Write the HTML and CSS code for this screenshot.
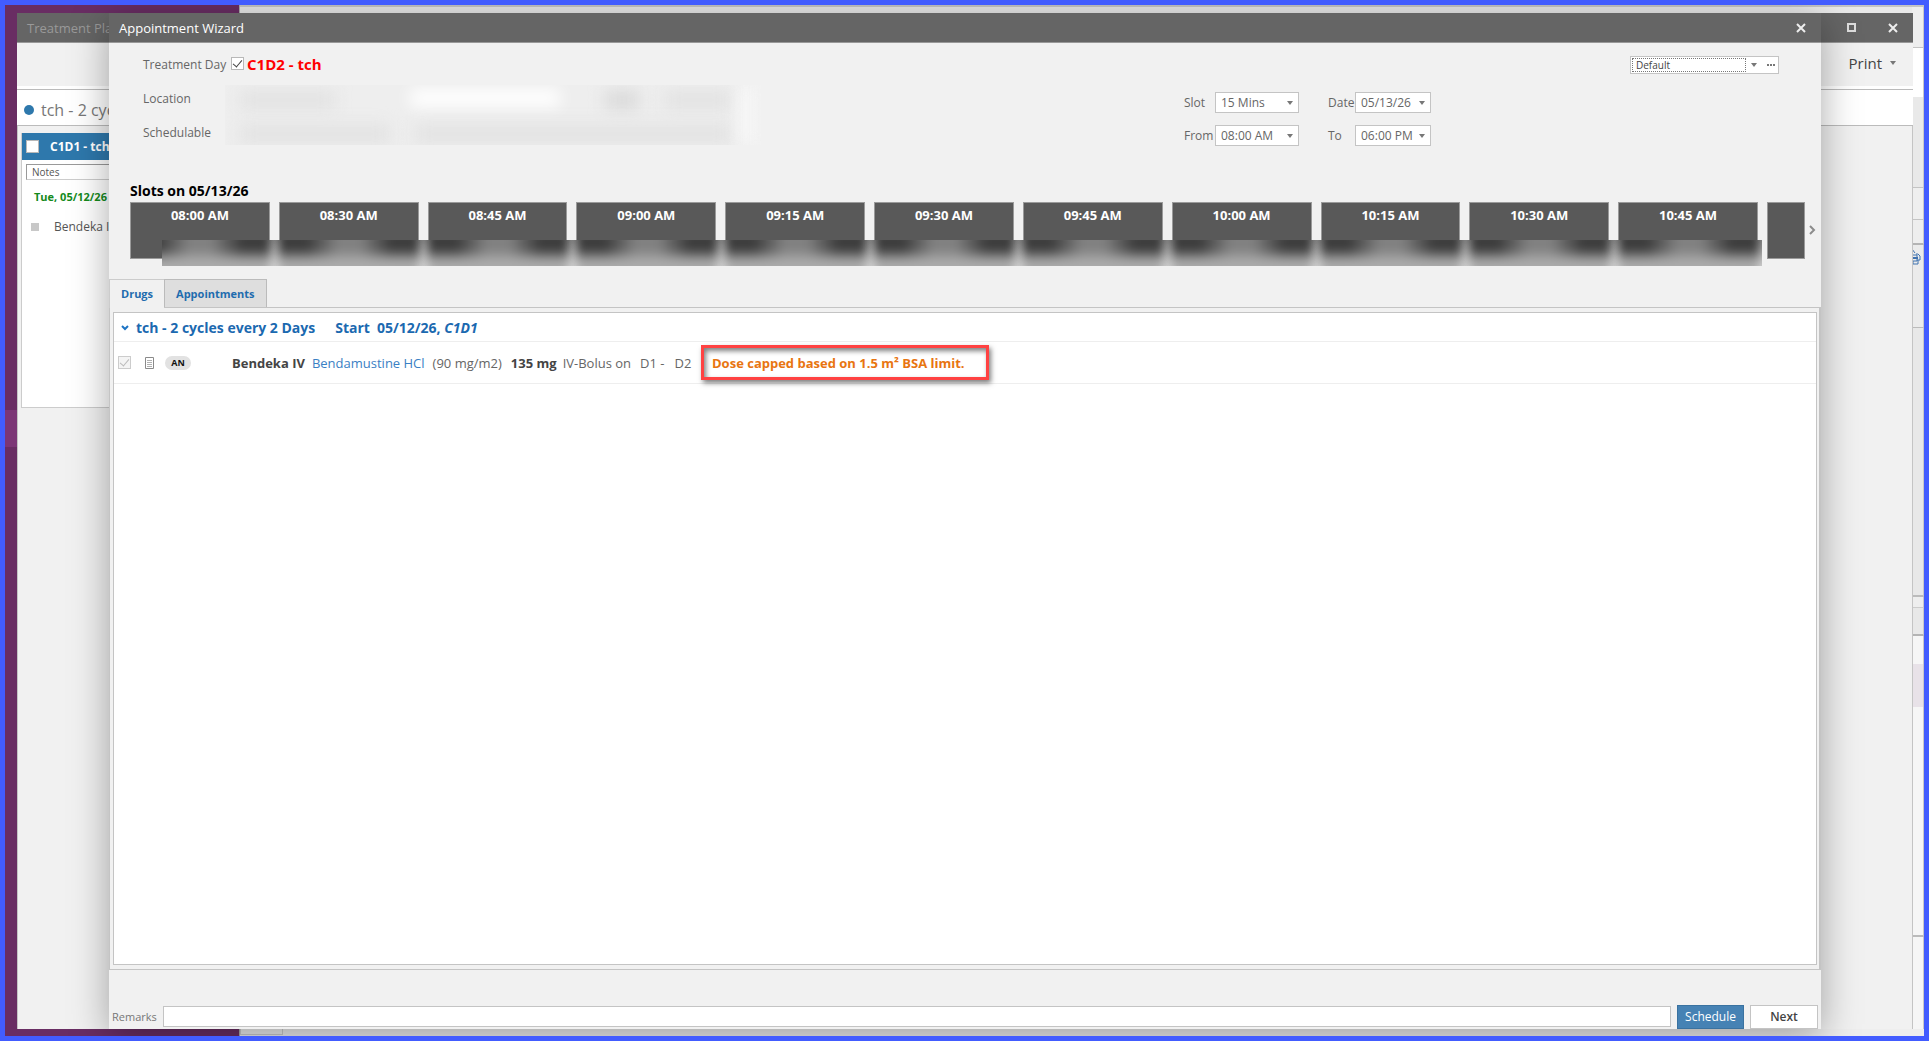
FILE: index.html
```html
<!DOCTYPE html>
<html lang="en">
<head>
<meta charset="utf-8">
<title>Appointment Wizard</title>
<link rel="stylesheet" href="styles.css">
</head>
<body>
<div class="app">
  <div class="app-rail"><div class="app-rail-mark"></div></div>
  <div class="app-body">
    <div class="app-top"></div>
    <div class="app-side">
      <div class="side-a"></div>
      <div class="side-b"></div>
      <div class="side-c"></div>
      <div class="side-d"></div>
      <div class="side-e"></div>
      <div class="side-f">
        <svg class="side-print" width="12" height="18" viewBox="0 0 12 18" fill="none" stroke="#3f72b0"><path d="M1 7V2l3 4M0 8h6v6H0M2 14v3h5v-4M5 7h2l2 2v4H6" /><path d="M2 11h5" stroke-width="2"/></svg>
      </div>
      <div class="side-g"></div>
      <div class="side-h"></div>
      <div class="side-i"></div>
      <div class="side-j"><div class="side-mark"></div></div>
      <div class="side-k"></div>
    </div>
    <div class="app-bottom"><div class="app-bottom-tab"></div></div>
  </div>
</div>

<section class="window plan">
  <header class="titlebar">
    <h2 class="plan-title">Treatment Plan</h2>
    <button class="win-btn" aria-label="Maximize"><svg width="10" height="10" viewBox="0 0 10 10" fill="none" stroke="#ddd" stroke-width="2"><rect x="1" y="1" width="7" height="7"/></svg></button>
    <button class="win-btn" aria-label="Close"><svg width="10" height="10" viewBox="0 0 10 10" stroke="#eee" stroke-width="2"><path d="M1 1l8 8M9 1l-8 8"/></svg></button>
  </header>
  <div class="plan-tools"><button class="print">Print <span class="caret"></span></button></div>
  <div class="plan-name"><span class="dot"></span>tch - 2 cycles</div>
  <div class="plan-area">
    <article class="day-card">
      <label class="day-head"><input type="checkbox" class="check">C1D1 - tch</label>
      <div class="day-notes">Notes</div>
      <div class="day-date">Tue, 05/12/26</div>
      <div class="day-drug"><span class="square"></span>Bendeka IV</div>
    </article>
  </div>
</section>

<section class="window wizard" role="dialog" aria-label="Appointment Wizard">
  <header class="titlebar">
    <h1 class="wizard-title">Appointment Wizard</h1>
    <button class="win-btn" aria-label="Close wizard"><svg width="10" height="10" viewBox="0 0 10 10" stroke="#eee" stroke-width="2"><path d="M1 1l8 8M9 1l-8 8"/></svg></button>
  </header>

  <div class="setup">
    <div class="facts">
      <label class="fact" for="day">Treatment Day</label>
      <div class="day"><input type="checkbox" class="check" id="day" checked><strong>C1D2 - tch</strong></div>
      <div class="fact">Location</div>
      <div class="masked"><i class="m1"></i><i class="m2"></i><i class="m3"></i><i class="m4"></i><i class="m5"></i><i class="m6"></i><i class="m7"></i></div>
      <div class="fact">Schedulable</div>
    </div>
    <div class="times">
      <label for="slot">Slot</label>
      <div class="combo combo-wide"><select id="slot"><option>15 Mins</option></select><span class="caret"></span></div>
      <label for="date">Date</label>
      <div class="combo"><select id="date"><option>05/13/26</option></select><span class="caret"></span></div>
      <label for="from">From</label>
      <div class="combo combo-wide"><select id="from"><option>08:00 AM</option></select><span class="caret"></span></div>
      <label for="to">To</label>
      <div class="combo"><select id="to"><option>06:00 PM</option></select><span class="caret"></span></div>
    </div>
    <div class="preset">
      <select class="preset-select" aria-label="Preset"><option>Default</option></select>
      <span class="caret"></span>
      <button class="more" aria-label="More"><i></i><i></i><i></i></button>
    </div>
  </div>

  <h3 class="slots-title">Slots on 05/13/26</h3>
  <div class="slots">
    <button class="slot">08:00 AM</button>
    <button class="slot">08:30 AM</button>
    <button class="slot">08:45 AM</button>
    <button class="slot">09:00 AM</button>
    <button class="slot">09:15 AM</button>
    <button class="slot">09:30 AM</button>
    <button class="slot">09:45 AM</button>
    <button class="slot">10:00 AM</button>
    <button class="slot">10:15 AM</button>
    <button class="slot">10:30 AM</button>
    <button class="slot">10:45 AM</button>
    <button class="slot slot-cut" aria-label="Next slot"></button>
    <div class="slots-mask"><i></i><i></i><i></i><i></i><i></i><i></i><i></i><i></i><i></i><i></i><i></i></div>
    <button class="slots-next" aria-label="Later slots"><svg width="8" height="10" viewBox="0 0 8 10" fill="none" stroke="#8c8c8c" stroke-width="2"><path d="M1 1l4 4-4 4"/></svg></button>
  </div>

  <nav class="tabs">
    <button class="tab tab-on">Drugs</button>
    <button class="tab">Appointments</button>
  </nav>
  <div class="tab-page">
    <div class="drugs">
      <div class="group">
        <svg class="group-arrow" width="8" height="6" viewBox="0 0 8 6" fill="none" stroke="#1d74c4" stroke-width="2"><path d="M1 1l3 3 3-3"/></svg>
        <span class="group-name">tch - 2 cycles every 2 Days</span>
        <span class="group-start">Start</span>
        <span class="group-date">05/12/26, <em>C1D1</em></span>
      </div>
      <div class="drug">
        <input type="checkbox" class="check" checked disabled aria-label="Bendeka IV">
        <svg class="doc" width="10" height="12" viewBox="0 0 10 12" fill="#fff" stroke="#8a8a8a"><path d="M.5.5h8v11h-8z"/><path d="M2 3.500h5M2 5.500h5M2 7.500h5M2 9.500h5" stroke="#b0b0b0"/></svg>
        <span class="pill">AN</span>
        <div class="drug-text">
          <b>Bendeka IV</b>
          <a class="generic" href="#">Bendamustine HCl</a>
          <span class="per">(90 mg/m2)</span>
          <b class="dose">135 mg</b>
          <span class="route">IV-Bolus on</span>
          <span class="d1">D1 -</span>
          <span>D2</span>
        </div>
        <div class="cap">Dose capped based on 1.5 m² BSA limit.</div>
      </div>
    </div>
  </div>

  <footer class="foot">
    <label for="remarks">Remarks</label>
    <input type="text" id="remarks" class="remarks">
    <button class="btn btn-main">Schedule</button>
    <button class="btn">Next</button>
  </footer>
</section>
<div class="frame"></div>
</body>
</html>
```
FILE: styles.css
```css
* { box-sizing: border-box; }
body {
  margin: 0;
  height: 100vh;
  position: relative;
  overflow: hidden;
  font: 12px/16px "Open Sans", "Noto Sans", sans-serif;
  color: #555;
  background: #e9e9e9;
}
h1, h2, h3 { margin: 0; }
button, select, input { font: inherit; color: inherit; margin: 0; padding: 0; border: 0; background: none; border-radius: 0; }
i { display: block; }

.frame { position: absolute; inset: 0; border: 5px solid #425cff; pointer-events: none; }

/* main application behind the windows */
.app { height: 100%; display: flex; padding: 5px; }
.app-rail { width: 234px; background: #692d63; padding-top: 405px; }
.app-rail-mark { width: 12px; height: 37px; background: #7c3676; }
.app-body { flex: 1; display: flex; flex-direction: column; align-items: flex-end; border-left: 1px solid #aaa; }
.app-top { width: 100%; height: 2px; background: #c4c4c4; }
.app-side { flex: 1; width: 12px; display: flex; flex-direction: column; }
.app-side > div { border-right: 1px solid #c8c8c8; }
.side-a { height: 41px; background: #eee; border-bottom: 1px solid #c4c4c4; }
.side-b { height: 49px; background: #fff; }
.side-c { height: 91px; background: #e9e9e9; border-bottom: 1px solid #c4c4c4; }
.side-d { height: 31px; background: #efefef; }
.side-e { height: 26px; background: #eee; border-top: 1px solid #c4c4c4; border-bottom: 2px solid #b4b4b4; }
.side-f { height: 82px; background: #ebebeb; }
.side-print { display: block; margin-top: 2px; margin-left: -1px; }
.side-g { height: 270px; background: #e8e8e8; border-top: 1px solid #bbb; border-bottom: 2px solid #bbb; }
.side-h { height: 10px; background: #eee; }
.side-i { height: 29px; background: #e8e8e8; border-top: 1px solid #ccc; border-bottom: 2px solid #b4b4b4; }
.side-j { height: 301px; background: #f6f6f6; border-bottom: 2px solid #bbb; padding-top: 28px; }
.side-mark { height: 43px; background: #e8e2e8; }
.side-k { flex: 1; background: #f6f6f6; }
.app-bottom { width: 100%; height: 7px; background: #eee; }
.app-bottom-tab { width: 43px; height: 6px; border: 1px solid #ccc; border-top: 0; }

/* windows */
.window { position: absolute; top: 13px; bottom: 12px; display: flex; flex-direction: column; background: #f1f1f1; overflow: hidden; }
.plan { left: 17px; right: 16px; }
.wizard { left: 109px; right: 108px; box-shadow: 0 8px 36px rgba(0, 0, 0, .34); }
.titlebar { flex: none; height: 30px; display: flex; align-items: center; background: #656565; border-bottom: 1px solid #999; padding-right: 10px; }
.titlebar h1, .titlebar h2 { flex: 1; font-size: 13px; font-weight: 400; line-height: 20px; }
.plan-title { padding-left: 10px; color: #999; }
.wizard-title { padding-left: 10px; color: #fff; }
.win-btn { width: 20px; height: 20px; display: grid; place-items: center; }
.plan .titlebar { gap: 21px; }

.plan-tools { height: 46px; border-bottom: 3px solid #fff; display: flex; justify-content: flex-end; align-items: flex-start; padding: 9px 17px 0 0; }
.print { font-size: 15px; line-height: 22px; color: #444; display: flex; align-items: center; gap: 8px; }
.caret { width: 0; height: 0; border: 3px solid transparent; border-top: 4px solid #777; border-bottom: 0; flex: none; }
.plan-name { height: 37px; border-top: 1px solid #bbb; border-bottom: 1px solid #bbb; background: #fff; display: flex; align-items: center; gap: 7px; padding: 4px 0 0 7px; font-size: 16px; color: #777; }
.dot { width: 10px; height: 10px; border-radius: 50%; background: #2e78ac; }
.plan-area { flex: 1; border: solid #c4c4c4; border-width: 0 1px; padding: 7px 3px; }
.day-card { width: 240px; height: 275px; background: #fff; border: 1px solid #ccc; border-top: 0; }
.day-head { height: 27px; background: #2e78ac; color: #fff; font-weight: 700; display: flex; align-items: center; gap: 11px; padding-left: 4px; }
.day-notes { height: 16px; margin: 4px 0 0 4px; border: 1px solid #ccc; border-top-color: #999; border-left-color: #999; padding-left: 5px; font-size: 10px; line-height: 15px; }
.day-date { margin: 9px 0 0 12px; font-size: 11px; font-weight: 700; color: #148a1c; }
.day-drug { margin: 14px 0 0 9px; display: flex; align-items: center; gap: 15px; }
.square { width: 8px; height: 8px; background: #c8c8c8; }

/* tick boxes */
.check { appearance: none; flex: none; width: 13px; height: 13px; background: #fff; border: 1px solid #b8b8b8; display: grid; place-items: center; }
.check:checked::after { content: ""; width: 4px; height: 8px; margin-top: -2px; border: solid #444; border-width: 0 1px 1px 0; transform: rotate(40deg); }
.check:disabled { background: #f4f4f4; border-color: #ccc; }
.check:disabled::after { border-color: #bbb; }

/* wizard header fields */
.setup { height: 139px; display: flex; align-items: flex-start; padding: 10px 42px 0 34px; color: #666; }
.facts { flex: 1; display: grid; grid-template-columns: 82px 1fr; grid-template-rows: 21px 34px 34px; }
.fact { align-self: end; line-height: 18px; white-space: nowrap; }
.day { display: flex; align-items: center; gap: 3px; padding-left: 6px; }
.day strong { font-size: 15px; color: #f00; }
.masked { position: relative; grid-row: 2 / 4; grid-column: 2; height: 60px; width: 536px; margin-top: 11px; overflow: hidden; background: linear-gradient(90deg, #eee, #eee 93%, #f1f1f1); }
.masked i { position: absolute; filter: blur(8px); height: 18px; background: #e2e2e2; }
.masked .m1 { left: 15px; top: 6px; width: 95px; }
.masked .m2 { left: 185px; top: 4px; width: 150px; background: #fff; }
.masked .m3 { left: 380px; top: 6px; width: 34px; background: #d9d9d9; }
.masked .m4 { left: 440px; top: 6px; width: 66px; }
.masked .m5 { left: 15px; top: 40px; width: 150px; }
.masked .m6 { left: 190px; top: 40px; width: 316px; }
.masked .m7 { left: 514px; top: 0; width: 14px; height: 60px; background: #f8f8f8; }
.times { display: grid; grid-template-columns: 31px 113px 27px 76px; grid-auto-rows: 21px; row-gap: 12px; padding-top: 39px; margin-right: 199px; align-items: center; }
.combo { height: 21px; background: #fff; border: 1px solid #c4c4c4; display: flex; align-items: center; padding-right: 5px; }
.combo-wide { width: 84px; }
.combo select { flex: 1; min-width: 0; appearance: none; padding-left: 5px; }
.preset { width: 149px; height: 18px; margin-top: 3px; background: #fff; border: 1px solid #c4c4c4; display: flex; align-items: center; padding-left: 1px; }
.preset-select { appearance: none; width: 114px; height: 14px; border: 1px dotted #777; font-size: 10px; line-height: 12px; padding-left: 3px; margin-right: 5px; color: #444; }
.more { display: flex; gap: 1px; margin-left: 10px; }
.more i { width: 2px; height: 2px; background: #777; }

/* slot strip */
.slots-title { padding-left: 21px; font-size: 14px; line-height: 18px; color: #000; }
.slots { position: relative; margin: 2px 16px 0 21px; height: 57px; display: flex; gap: 9px; }
.slot { flex: 1; background: #595959; border: 1px solid #9a9a9a; color: #fff; font-size: 13px; font-weight: 700; line-height: 16px; padding-top: 4px; display: flex; justify-content: center; }
.slot-cut { flex: none; width: 38px; }
.slots-mask { position: absolute; left: 32px; right: 43px; top: 38px; height: 26px; padding-right: 3px; overflow: hidden; display: flex; gap: 9px; background: linear-gradient(#989898, #d4d4d4); }
.slots-mask i { flex: 1; height: 44px; margin-top: -8px; filter: blur(5px); background: linear-gradient(transparent 38%, #acacac 68%), linear-gradient(90deg, #3c3c3c 20%, #808080 42%, #808080 58%, #3c3c3c 80%); }
.slots-mask i:first-child { margin-left: -32px; }
.slots-next { position: absolute; right: -12px; top: 23px; width: 8px; height: 10px; display: flex; }

/* tabs */
.tabs { display: flex; align-items: flex-end; height: 29px; margin-top: 20px; font-size: 11px; color: #1f6cae; border-bottom: 1px solid #c4c4c4; }
.tab { height: 28px; padding: 0 11px; font-weight: 700; background: #dedede; border: 1px solid #bbb; border-bottom: 0; }
.tab-on { height: 29px; margin-bottom: -1px; background: #f1f1f1; border-color: #ccc; border-right: 0; }
.tab-page { flex: 1; display: flex; border: 1px solid #c4c4c4; border-top: 0; border-right-width: 2px; padding: 4px 2px 4px 3px; }
.drugs { flex: 1; background: #fff; border: 1px solid #c4c4c4; }
.group { height: 29px; display: flex; align-items: center; border-bottom: 1px solid #eee; padding: 1px 0 0 7px; font-size: 14px; font-weight: 700; color: #1b69b0; }
.group-name { margin-left: 7px; }
.group-start { margin-left: 20px; }
.group-date { margin-left: 7px; }
.drug { height: 42px; display: flex; align-items: center; border-bottom: 1px solid #eee; padding-left: 4px; font-size: 13px; line-height: 18px; color: #666; }
.doc { margin-left: 14px; }
.pill { width: 26px; height: 14px; margin-left: 10px; border-radius: 7px; background: #e2e2e2; color: #111; font-size: 9px; font-weight: 700; line-height: 14px; text-align: center; }
.drug-text { width: 469px; margin-left: 41px; display: flex; align-items: baseline; white-space: nowrap; }
.drug-text b { color: #444; }
.generic { margin-left: 7px; color: #3a80c4; text-decoration: none; }
.per { margin: 0 9px 0 8px; }
.route { margin: 0 9px 0 6px; }
.d1 { margin-right: 10px; }
.cap { width: 288px; height: 35px; border: 3px solid #ff4242; box-shadow: 2px 3px 5px rgba(0, 0, 0, .5), inset 2px 3px 5px rgba(0, 0, 0, .5); padding-left: 8px; line-height: 30px; font-weight: 700; color: #e87511; white-space: nowrap; }

/* footer */
.foot { height: 59px; display: flex; align-items: center; padding: 34px 3px 0; color: #777; }
.foot label { width: 51px; font-size: 11px; }
.remarks { flex: 1; height: 21px; background: #fff; border: 1px solid #c4c4c4; margin-right: 6px; }
.btn { width: 68px; height: 24px; background: #fff; border: 1px solid #c4c4c4; color: #444; font-weight: 600; }
.btn-main { width: 67px; margin-right: 6px; background: #4682b4; border-color: #3a72a0; color: #fff; font-weight: 400; }
```
